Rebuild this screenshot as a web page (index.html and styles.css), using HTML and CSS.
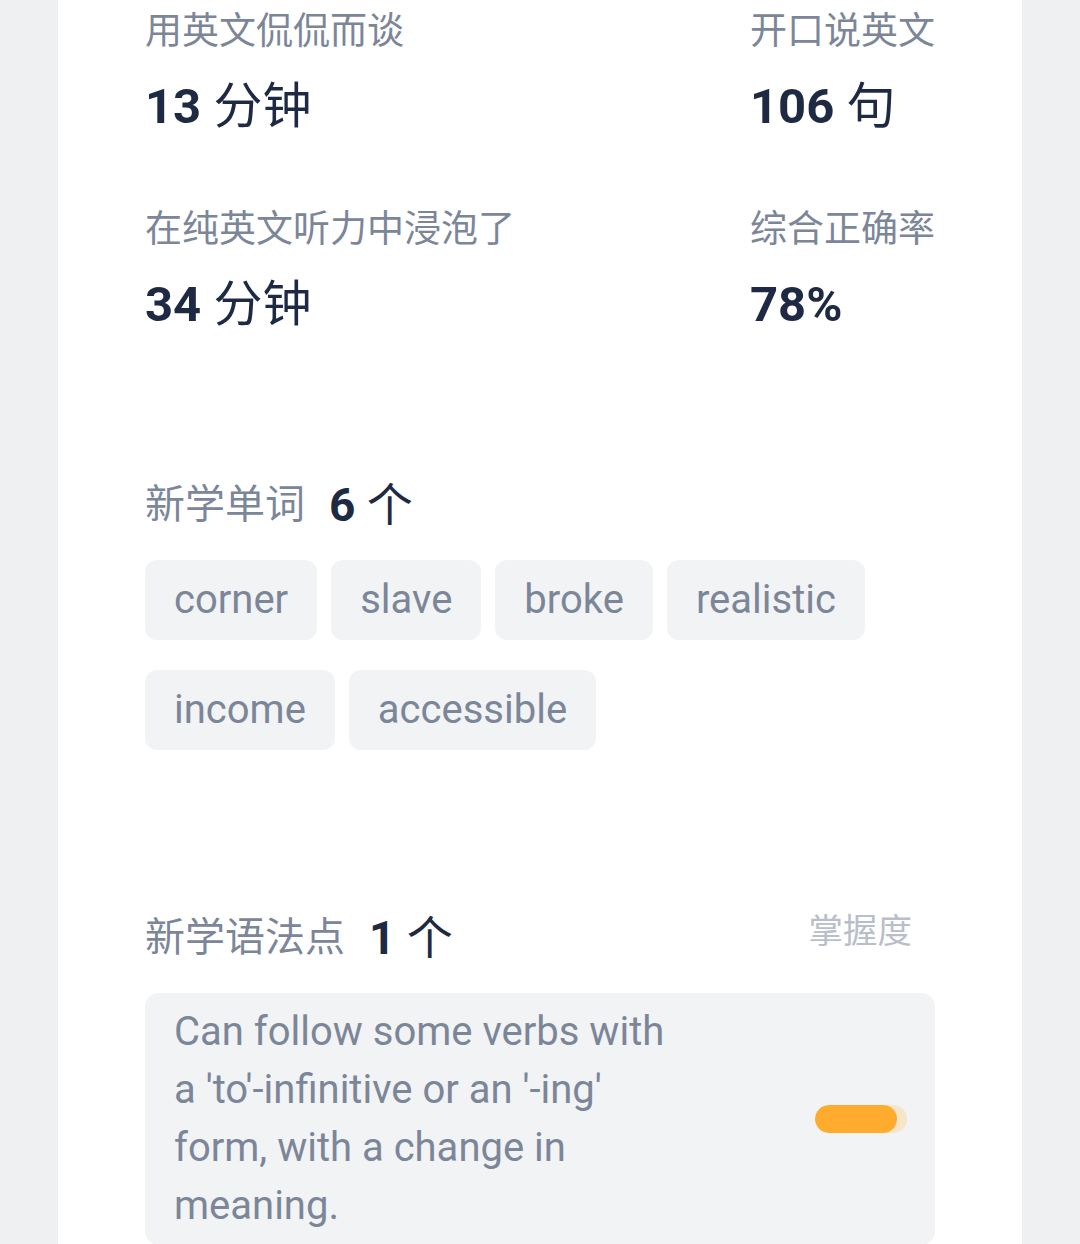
FILE: index.html
```html
<!DOCTYPE html>
<html lang="zh-CN">
<head>
<meta charset="utf-8">
<title>学习报告</title>
<link rel="stylesheet" href="styles.css">
</head>
<body>
<div class="card">
  <div class="stats">
    <div class="stat">
      <div class="stat-label">用英文侃侃而谈</div>
      <div class="stat-value">13 <span class="unit">分钟</span></div>
    </div>
    <div class="stat">
      <div class="stat-label">开口说英文</div>
      <div class="stat-value">106 <span class="unit">句</span></div>
    </div>
    <div class="stat">
      <div class="stat-label">在纯英文听力中浸泡了</div>
      <div class="stat-value">34 <span class="unit">分钟</span></div>
    </div>
    <div class="stat">
      <div class="stat-label">综合正确率</div>
      <div class="stat-value">78%</div>
    </div>
  </div>

  <section class="words">
    <h2 class="sec-head"><span class="sec-title">新学单词</span><span class="sec-count">6 <span class="unit">个</span></span></h2>
    <div class="chips">
      <span class="chip">corner</span>
      <span class="chip">slave</span>
      <span class="chip">broke</span>
      <span class="chip">realistic</span>
      <span class="chip">income</span>
      <span class="chip">accessible</span>
    </div>
  </section>

  <section class="grammar">
    <div class="grammar-head">
      <h2 class="sec-head"><span class="sec-title">新学语法点</span><span class="sec-count">1 <span class="unit">个</span></span></h2>
      <span class="mastery">掌握度</span>
    </div>
    <div class="grammar-box">
      <p class="grammar-text">Can follow some verbs with a 'to'-infinitive or an '-ing' form, with a change in meaning.</p>
      <div class="bar"><div class="bar-fill" style="width: 89%"></div></div>
    </div>
  </section>
</div>
</body>
</html>
```

FILE: styles.css
```css
html, body {
  margin: 0;
  padding: 0;
}
body {
  background: #eff0f2;
  font-family: Roboto, "Noto Sans CJK SC", sans-serif;
  overflow: hidden;
}
.card {
  margin: 0 58px;
  background: #ffffff;
  min-height: 1300px;
  padding: 10px 87px 0 87px;
  box-sizing: border-box;
}
.stats {
  display: grid;
  grid-template-columns: 605px 1fr;
  row-gap: 71px;
}
.stat-label {
  font-size: 37px;
  line-height: 44px;
  color: #7c8699;
}
.stat-value {
  margin-top: 23px;
  font-size: 49px;
  line-height: 60px;
  font-weight: 700;
  color: #1e2a43;
}
.unit {
  font-weight: 400;
}
.sec-head {
  margin: 0;
  font-size: 40px;
  line-height: 50px;
  font-weight: 400;
  display: flex;
  align-items: center;
  gap: 24px;
}
.sec-title {
  color: #7c8699;
}
.sec-count {
  color: #1e2a43;
  font-weight: 700;
  font-size: 46px;
}
.words {
  margin-top: 145px;
}
.chips {
  margin-top: 30px;
  display: flex;
  flex-wrap: wrap;
  column-gap: 14px;
  row-gap: 30px;
}
.chip {
  height: 80px;
  line-height: 80px;
  padding: 0 29px;
  background: #f2f3f5;
  border-radius: 12px;
  font-size: 40px;
  color: #7c8699;
}
.grammar {
  margin-top: 163px;
}
.grammar-head {
  display: flex;
  justify-content: space-between;
  align-items: center;
}
.mastery {
  font-size: 34.5px;
  color: #b9bfca;
  margin-right: 23px;
  margin-top: -20px;
}
.grammar-box {
  margin-top: 30px;
  background: #f2f3f5;
  border-radius: 14px;
  padding: 10px 28px 10px 29px;
  display: flex;
  justify-content: space-between;
  align-items: center;
}
.grammar-text {
  margin: 0;
  width: 505px;
  font-size: 40px;
  line-height: 58px;
  color: #7c8699;
}
.bar {
  width: 92px;
  height: 28px;
  border-radius: 14px;
  background: #f7e5ca;
  overflow: hidden;
}
.bar-fill {
  height: 100%;
  background: #ffab2e;
  border-radius: 14px;
}
```
